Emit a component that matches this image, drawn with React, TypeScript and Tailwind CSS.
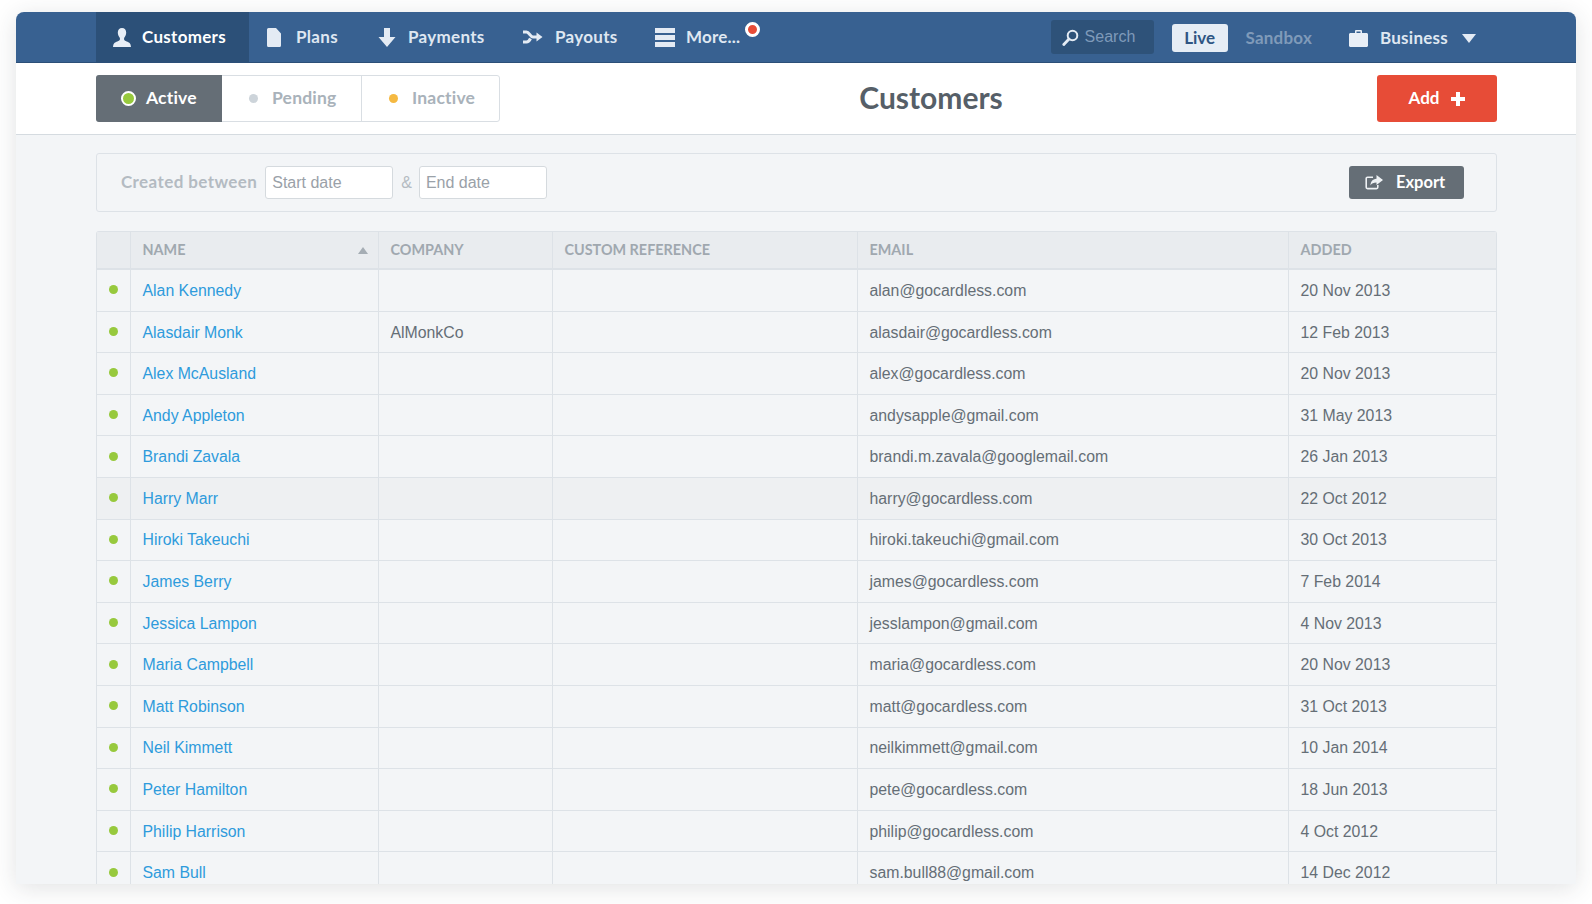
import React from 'react';

const customers = [
  { name: 'Alan Kennedy', company: '', email: 'alan@gocardless.com', added: '20 Nov 2013' },
  { name: 'Alasdair Monk', company: 'AlMonkCo', email: 'alasdair@gocardless.com', added: '12 Feb 2013' },
  { name: 'Alex McAusland', company: '', email: 'alex@gocardless.com', added: '20 Nov 2013' },
  { name: 'Andy Appleton', company: '', email: 'andysapple@gmail.com', added: '31 May 2013' },
  { name: 'Brandi Zavala', company: '', email: 'brandi.m.zavala@googlemail.com', added: '26 Jan 2013' },
  { name: 'Harry Marr', company: '', email: 'harry@gocardless.com', added: '22 Oct 2012' },
  { name: 'Hiroki Takeuchi', company: '', email: 'hiroki.takeuchi@gmail.com', added: '30 Oct 2013' },
  { name: 'James Berry', company: '', email: 'james@gocardless.com', added: '7 Feb 2014' },
  { name: 'Jessica Lampon', company: '', email: 'jesslampon@gmail.com', added: '4 Nov 2013' },
  { name: 'Maria Campbell', company: '', email: 'maria@gocardless.com', added: '20 Nov 2013' },
  { name: 'Matt Robinson', company: '', email: 'matt@gocardless.com', added: '31 Oct 2013' },
  { name: 'Neil Kimmett', company: '', email: 'neilkimmett@gmail.com', added: '10 Jan 2014' },
  { name: 'Peter Hamilton', company: '', email: 'pete@gocardless.com', added: '18 Jun 2013' },
  { name: 'Philip Harrison', company: '', email: 'philip@gocardless.com', added: '4 Oct 2012' },
  { name: 'Sam Bull', company: '', email: 'sam.bull88@gmail.com', added: '14 Dec 2012' },
];

const gridCols = 'grid grid-cols-[33px_248px_174px_305px_431px_1fr]';
const cell = 'border-l border-[#dde2e7] first:border-l-0 pl-[11.5px] pr-3 flex items-center';

const PersonIcon = () => (
  <svg width="20" height="19" viewBox="0 0 20 19" fill="#e8eef6">
    <path d="M10 0c2.600 0 4.200 1.900 4.200 4.600 0 2.200-.9 4.300-2.100 5.300v1.600c0 .9 1 1.300 2.600 1.900 2.200.8 4.100 1.500 4.300 5.600H1c.2-4.100 2.100-4.800 4.300-5.600 1.600-.6 2.600-1 2.600-1.900V9.900C6.700 8.900 5.800 6.800 5.800 4.600 5.800 1.900 7.400 0 10 0z" />
  </svg>
);

const DocIcon = () => (
  <svg width="15" height="19" viewBox="0 0 15 19" fill="#e4ebf4">
    <path d="M1.500 0H9l5 5.500V17.500a1.500 1.500 0 0 1-1.500 1.500h-11A1.500 1.500 0 0 1 0 17.500v-16A1.500 1.500 0 0 1 1.500 0z" />
  </svg>
);

const ArrowDownIcon = () => (
  <svg width="18" height="19" viewBox="0 0 18 19" fill="#e4ebf4">
    <path d="M6 0h6v9h5.500L9 19 .5 9H6z" />
  </svg>
);

const RouteIcon = () => (
  <svg width="20" height="14" viewBox="0 0 20 14" fill="none" stroke="#e4ebf4" strokeWidth="3">
    <path d="M0 2h3.500c2.800 0 3.500 5 6.500 5h5" />
    <path d="M0 12h3.500c2.200 0 3-1.500 4-3.500" />
    <path d="M13.500 2.500L19.500 7l-6 4.500z" fill="#e4ebf4" stroke="none" />
  </svg>
);

const MenuIcon = () => (
  <svg width="20" height="19" viewBox="0 0 20 19" fill="#e4ebf4">
    <rect width="20" height="5" />
    <rect y="7" width="20" height="5" />
    <rect y="14" width="20" height="5" />
  </svg>
);

const SearchIcon = () => (
  <svg width="17" height="17" viewBox="0 0 17 17" fill="none" stroke="#e4ebf4">
    <circle cx="10.500" cy="6.500" r="4.800" strokeWidth="2" />
    <path d="M7 10L1.800 15.500" strokeWidth="2.800" strokeLinecap="round" />
  </svg>
);

const BriefcaseIcon = () => (
  <svg width="19" height="17" viewBox="0 0 19 17" fill="#e8eef6">
    <path d="M6 3V1.200C6 .5 6.500 0 7.200 0h4.600c.7 0 1.200.5 1.200 1.200V3h4.500c.8 0 1.500.7 1.500 1.500V15.500c0 .8-.7 1.500-1.500 1.500h-16C.7 17 0 16.300 0 15.500V4.500C0 3.700.7 3 1.500 3zm1.500 0h4V1.500h-4z" fillRule="evenodd" />
  </svg>
);

const ExportIcon = () => (
  <svg width="18" height="15" viewBox="0 0 18 15" fill="none">
    <path d="M8 2.200H2.500A1.300 1.300 0 0 0 1.200 3.500v8.800a1.300 1.300 0 0 0 1.300 1.300h9a1.300 1.300 0 0 0 1.300-1.300V10" stroke="#eef1f4" strokeWidth="1.600" />
    <path d="M11.500 0L18 5l-6.500 5V7.500c-3 0-4.800.8-6 3 0-4 2-6.500 6-6.800z" fill="#eef1f4" />
  </svg>
);

const navItems = [
  { label: 'Customers', icon: <PersonIcon />, active: true, width: 'w-[153px]', pad: 'pl-[16px]', gap: 'gap-[10px]' },
  { label: 'Plans', icon: <DocIcon />, active: false, width: 'w-[110px]', pad: 'pl-[18px]', gap: 'gap-[14px]' },
  { label: 'Payments', icon: <ArrowDownIcon />, active: false, width: 'w-[145px]', pad: 'pl-[19px]', gap: 'gap-[12px]' },
  { label: 'Payouts', icon: <RouteIcon />, active: false, width: 'w-[132px]', pad: 'pl-[19px]', gap: 'gap-[12px]' },
];

const App: React.FC = () => {
  return (
    <div className="h-[904px] bg-white pt-3 px-4 overflow-hidden font-['Liberation_Sans',sans-serif]">
      <div className="h-[872px] rounded-t-[8px] overflow-hidden bg-[#f3f5f7] shadow-[0_4px_24px_rgba(40,50,60,0.14)]">
        {/* top nav */}
        <div className="h-[51px] bg-[#386191] border-b border-[#2c4f78] pl-20 pr-[100px] flex items-stretch font-['Lato',sans-serif] font-bold text-[17px] text-[#dfe7f1]">
          {navItems.map((item) => (
            <div
              key={item.label}
              className={`${item.width} ${item.pad} ${item.gap} flex items-center ${item.active ? 'bg-[#2c5078] text-white' : ''}`}
            >
              {item.icon}
              <span className="tracking-[0.3px] pb-[1px]">{item.label}</span>
            </div>
          ))}
          <div className="flex items-center gap-[11px] pl-[19px] relative">
            <MenuIcon />
            <span className="tracking-[0.2px] pb-[1px]">More...</span>
            <span className="absolute right-[-20px] top-[10px] w-[15px] h-[15px] rounded-full bg-[#e74c37] border-[3px] border-white" />
          </div>

          <div className="ml-auto flex items-center">
            <div className="w-[103px] h-[34px] rounded-[3px] bg-[#2e5279] flex items-center gap-[6px] pl-[11px] font-['Liberation_Sans',sans-serif] font-normal text-[16px] text-[#7f9ab9]">
              <SearchIcon />
              <span>Search</span>
            </div>
            <div className="ml-[18px] mt-[2px] w-[56px] h-[28px] rounded-[3px] bg-[#e6edf5] text-[#2f5583] flex items-center justify-center">
              Live
            </div>
            <span className="ml-[18px] mt-[2px] text-[#7f9ab9] tracking-[0.2px]">Sandbox</span>
            <div className="ml-[37px] mt-[2px] flex items-center gap-[12px]">
              <BriefcaseIcon />
              <span className="tracking-[0.25px] pb-[1px]">Business</span>
              <span className="ml-[2px] w-0 h-0 border-x-[7px] border-x-transparent border-t-[9px] border-t-[#e4ebf4]" />
            </div>
          </div>
        </div>

        {/* sub header */}
        <div className="h-[72px] bg-white border-b border-[#d5dbe0] px-20 pr-[79px] flex items-center relative font-['Lato',sans-serif] font-bold">
          <div className="flex h-[47px] rounded-[3px] border border-[#d9dee3] text-[17.500px] text-[#a9b2ba] tracking-[0.2px]">
            <div className="w-[126px] -m-px h-[47px] rounded-l-[3px] bg-[#656e76] text-white flex items-center gap-[10px] pl-[25px]">
              <span className="w-[15px] h-[15px] rounded-full bg-[#97c93d] border-[2px] border-white" />
              <span className="pb-[1px]">Active</span>
            </div>
            <div className="w-[140px] ml-px border-r border-[#d9dee3] flex items-center gap-[14px] pl-[27px]">
              <span className="w-[9px] h-[9px] rounded-full bg-[#cdd4da]" />
              <span className="pb-[1px]">Pending</span>
            </div>
            <div className="w-[137px] flex items-center gap-[14px] pl-[27px]">
              <span className="w-[9px] h-[9px] rounded-full bg-[#f5b942]" />
              <span className="pb-[1px]">Inactive</span>
            </div>
          </div>
          <h1 className="absolute left-0 right-0 ml-[270px] pb-[3px] text-center text-[30px] font-bold text-[#565f68] pointer-events-none">
            Customers
          </h1>
          <button className="ml-auto w-[120px] h-[47px] rounded-[3px] bg-[#e74c37] text-white text-[17px] flex items-center justify-center gap-[12px]">
            <span className="pb-[1px]">Add</span>
            <svg width="14" height="14" viewBox="0 0 14 14" fill="#fff">
              <path d="M5 0h4v5h5v4H9v5H5V9H0V5h5z" />
            </svg>
          </button>
        </div>

        <div className="pl-20 pr-[79px] pt-[18px]">
          {/* filter */}
          <div className="h-[59px] rounded-[3px] border border-[#dde2e7] flex items-center pl-6 pr-8 text-[16px]">
            <span className="font-['Lato',sans-serif] font-bold text-[17px] pb-[2px] text-[#b4bbc2] tracking-[0.4px]">Created between</span>
            <div className="ml-2 w-[128px] h-[33px] rounded-[3px] border border-[#d5dade] bg-white pl-[6px] flex items-center text-[#9aa1a8]">
              Start date
            </div>
            <span className="ml-2 mr-[7px] text-[#b4bbc2]">&amp;</span>
            <div className="w-[128px] h-[33px] rounded-[3px] border border-[#d5dade] bg-white pl-[6px] flex items-center text-[#9aa1a8]">
              End date
            </div>
            <button className="ml-auto w-[115px] h-[33px] rounded-[3px] bg-[#656e76] text-white font-['Lato',sans-serif] font-bold text-[16.500px] flex items-center gap-[13px] pl-4">
              <ExportIcon />
              <span>Export</span>
            </button>
          </div>

          {/* customers table */}
          <div className="mt-[19px] rounded-t-[3px] border-x border-t border-[#dde2e7]">
            <div className={`${gridCols} h-[38px] bg-[#e9ecef] border-b-2 border-[#dde2e7] font-['Lato',sans-serif] font-bold text-[14.400px] text-[#a0a8af]`}>
              <div className={cell} />
              <div className={`${cell} justify-between`}>
                NAME
                <span className="w-0 h-0 border-x-[5px] border-x-transparent border-b-[7px] border-b-[#a5adb4] mr-[-2px]" />
              </div>
              <div className={cell}>COMPANY</div>
              <div className={cell}>CUSTOM REFERENCE</div>
              <div className={cell}>EMAIL</div>
              <div className={cell}>ADDED</div>
            </div>
            {customers.map((c) => (
              <div
                key={c.email}
                className={`${gridCols} h-[41.6px] border-b border-[#dde2e7] text-[15.830px] text-[#656e76] ${c.name === 'Harry Marr' ? 'bg-[#eef0f2]' : ''}`}
              >
                <div className={`${cell} !pl-0 !pr-0 justify-center pb-[1px]`}>
                  <span className="w-[9px] h-[9px] rounded-full bg-[#97c93d]" />
                </div>
                <div className={`${cell} pt-[1px] text-[#2e9bdc]`}>{c.name}</div>
                <div className={`${cell} pt-[1px]`}>{c.company}</div>
                <div className={cell} />
                <div className={`${cell} pt-[1px]`}>{c.email}</div>
                <div className={`${cell} pt-[1px]`}>{c.added}</div>
              </div>
            ))}
          </div>
        </div>
      </div>
    </div>
  );
};

export default App;
